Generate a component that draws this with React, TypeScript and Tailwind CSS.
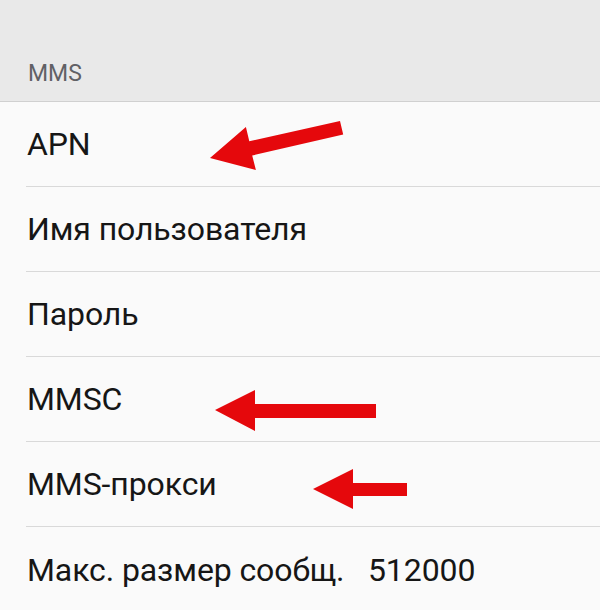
import * as React from "react";

type Row = {
  label: string;
  arrow?: string;
};

// arrow outlines, in row-local coordinates (row is 600 x 85)
const rows: Row[] = [
  {
    label: "APN",
    arrow:
      "210,56 245.9,25.1 249.3,39.3 340,18.9 343.2,32.6 252.2,53.5 255.9,68",
  },
  { label: "Имя пользователя" },
  { label: "Пароль" },
  {
    label: "MMSC",
    arrow: "215,53 255,33 255,47 376,47 376,61 255,61 255,74",
  },
  {
    label: "MMS-прокси",
    arrow: "313,47 353,27 353,41 407,41 407,54 353,54 353,67",
  },
  { label: "Макс. размер сообщ.\u00a0\u00a0\u00a0512000" },
];

function SettingsRow({ row, last }: { row: Row; last: boolean }) {
  return (
    <div className="relative h-[85px] pl-[26px]">
      <div
        className={
          "flex h-full items-center pl-[1px] text-[32px] tracking-[-0.1px] text-[#161616]" +
          (last ? "" : " border-b border-[#d9d9d9]")
        }
      >
        {row.label}
      </div>
      {row.arrow && (
        <svg
          className="absolute inset-0"
          width="600"
          height="85"
          viewBox="0 0 600 85"
          aria-hidden="true"
        >
          <polygon points={row.arrow} fill="#e5080c" />
        </svg>
      )}
    </div>
  );
}

export default function App() {
  return (
    <div className="h-[610px] w-[600px] overflow-hidden bg-[#fafafa] font-['Roboto',sans-serif]">
      <div className="flex h-[102px] items-end border-b border-[#d0d0d0] bg-[#e9e9e9] pb-[16px] pl-[28px]">
        <span className="text-[23px] leading-none text-[#616165]">MMS</span>
      </div>
      {rows.map((row, i) => (
        <SettingsRow key={row.label} row={row} last={i === rows.length - 1} />
      ))}
    </div>
  );
}
